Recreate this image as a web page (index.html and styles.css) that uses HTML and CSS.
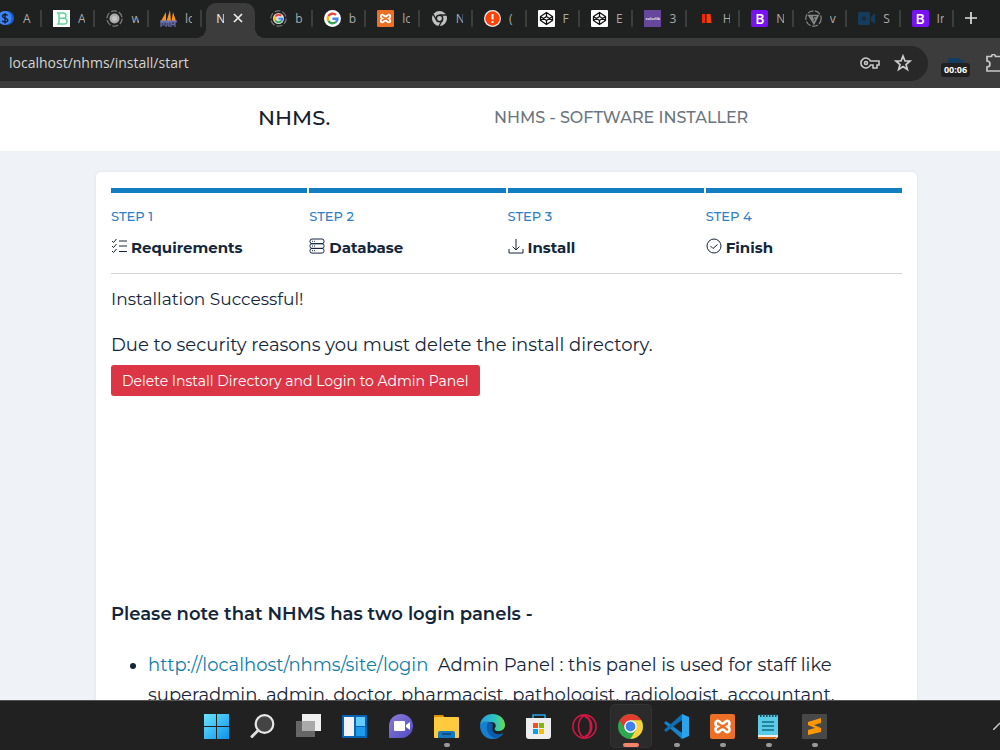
FILE: index.html
```html
<!DOCTYPE html>
<html lang="en">
<head>
    <meta charset="utf-8">
    <title>NHMS - Software Installer</title>
    <link rel="stylesheet" href="styles.css">
</head>
<body>
    <div class="tab-strip">
        <div class="tab first">
            <svg viewBox="2 0 15 17" width="15" height="17"><circle cx="9" cy="8" r="7" fill="#1c5fd0"/><circle cx="6.500" cy="8" r="7" fill="#3f86f5"/><path d="M9.500 5.500C9 4 4.500 3.800 4.500 6.200S9.800 8 9.800 10.200 5 12.500 4.200 10.600M7 3v10.500" fill="none" stroke="#10233f" stroke-width="1.500"/></svg>
            <span>A</span>
        </div>
        <div class="tab">
            <svg viewBox="0 0 17 17"><path fill="#fff" d="M0 0h17v17H0z"/><path d="M4 3h6q3 0 3 2.700T10 8.300q4 0 4 3T10.500 14H4M6 3v11M6 8.300h4" fill="none" stroke="#63d397" stroke-width="1.500"/></svg>
            <span>A</span>
        </div>
        <div class="tab">
            <svg viewBox="0 0 17 17"><circle cx="8.500" cy="8.500" r="7.600" fill="none" stroke="#777" stroke-width="1.300" stroke-dasharray="6 2"/><circle cx="8.500" cy="8.500" r="5" fill="#aaa"/><circle cx="8.500" cy="8.500" r="2.500" fill="#c4c4c4"/></svg>
            <span>w</span>
        </div>
        <div class="tab">
            <svg viewBox="0 0 17 17"><path d="M1 11 6 2v9zM6.500 11 10 0l1 11zM11.500 11 13 2l3 9z" fill="#f7941d"/><path d="M0 11h17l-1 1H1zM1 17v-4h3v2H1m5 2v-4h3v4m-3-2h3m2 2v-4l2 2 2-2v4" fill="none" stroke="#6b6fae" stroke-width="1.200"/></svg>
            <span>lo</span>
        </div>
        <div class="tab active">
            <span>N</span>
            <button class="close" aria-label="Close tab"><svg viewBox="0 0 10 10" width="10" height="10"><path d="m1 1 8 8M9 1 1 9" stroke="#eee" stroke-width="1.700"/></svg></button>
        </div>
        <div class="tab">
            <svg viewBox="0 0 17 17"><circle cx="8.500" cy="8.500" r="7.700" fill="none" stroke="#777" stroke-width="1.200" stroke-dasharray="6 2"/><circle cx="8.500" cy="8.500" r="5.500" fill="#ddd"/><use href="#g" x="3.500" y="3.500" width="10" height="10"/></svg>
            <span>b</span>
        </div>
        <div class="tab">
            <svg viewBox="0 0 17 17"><circle cx="8.500" cy="8.500" r="8.500" fill="#fff"/><symbol id="g" viewBox="0 0 24 24"><g fill="none" stroke-width="4.500"><path d="M4.500 7.500A9 9 0 0 1 18.500 5.500" stroke="#ea4335"/><path d="M4.500 16.500a9 9 0 0 1 0-9" stroke="#fbbc05"/><path d="M18 18.700A9 9 0 0 1 4.500 16.500" stroke="#34a853"/><path d="M12 12.300h9q0 4-3 6.400" stroke="#4285f4"/></g></symbol><use href="#g" x="2" y="2" width="13" height="13"/></svg>
            <span>b</span>
        </div>
        <div class="tab">
            <svg viewBox="0 0 25 25"><symbol id="xampp" viewBox="0 0 25 25"><rect width="25" height="25" rx="2" fill="#eb7025"/><path d="M8.500 7C5 6 4.500 11 7.500 12.500 4.500 14 5 19 8.500 18c2-.5 1.500-2.500 4-2.500s2 2 4 2.500c3.500 1 4-4 1-5.500 3-1.500 2.500-6.500-1-5.500-2 .5-1.500 2.500-4 2.500s-2-2-4-2.500z" fill="none" stroke="#fff" stroke-width="2.600"/></symbol><use href="#xampp" width="25" height="25"/></svg>
            <span>lo</span>
        </div>
        <div class="tab">
            <svg viewBox="0 0 17 17"><circle cx="8.500" cy="8.500" r="7.500" fill="#c2c2c2"/><circle cx="8.500" cy="8.500" r="3.200" fill="#c2c2c2" stroke="#222" stroke-width="1.500"/><path d="M8.500 5H16M5.500 10 2 4M11.500 10 8 16" stroke="#222" stroke-width="1.400"/></svg>
            <span>N</span>
        </div>
        <div class="tab">
            <svg viewBox="0 0 17 17"><circle cx="8.500" cy="8.500" r="8.500" fill="#eee"/><circle cx="8.500" cy="8.500" r="7.200" fill="#ff4106"/><path d="M8.500 4v5.500M8.500 11v2" stroke="#fff" stroke-width="2"/></svg>
            <span>(</span>
        </div>
        <div class="tab">
            <svg viewBox="0 0 17 17"><symbol id="codepen" viewBox="0 0 17 17"><rect width="17" height="17" rx="1" fill="#fff"/><path d="m8.500 2.500 6 4v4l-6 4-6-4v-4zM2.500 6.500l6 4 6-4M2.500 10.500l6-4 6 4M8.500 2.500v4M8.500 10.500v4" fill="none" stroke="#111" stroke-width="1.300"/></symbol><use href="#codepen" width="17" height="17"/></svg>
            <span>F</span>
        </div>
        <div class="tab">
            <svg viewBox="0 0 17 17"><use href="#codepen" width="17" height="17"/></svg>
            <span>E</span>
        </div>
        <div class="tab">
            <div class="colorlib">colorlib</div>
            <span>3</span>
        </div>
        <div class="tab">
            <svg viewBox="0 0 17 17"><path d="M4 4h3v9H4z" fill="#f32800"/><path d="M8.500 4h4l1 9h-5z" fill="#ff3c00"/></svg>
            <span>H</span>
        </div>
        <div class="tab">
            <div class="bootstrap">B</div>
            <span>N</span>
        </div>
        <div class="tab">
            <svg viewBox="0 0 17 17"><g fill="none" stroke="#888"><circle cx="8.500" cy="8.500" r="7.700" stroke-width="1.200" stroke-dasharray="6 1.500"/><path d="M4 5.500h9l-4 8zM6.500 5.500l2 5M9 8h2.500" stroke-width="1.700"/></g></svg>
            <span>v</span>
        </div>
        <div class="tab">
            <svg viewBox="0 0 17 17"><path d="M1 2h10q1 0 1 2v9q0 2-2 2H2q-2 0-2-2V4q0-2 1-2m12 5 4-4v11l-4-3z" fill="#153b5d"/><circle cx="6" cy="8.500" r="2" fill="#20292f"/></svg>
            <span>S</span>
        </div>
        <div class="tab">
            <div class="bootstrap">B</div>
            <span>In</span>
        </div>
        <button class="new-tab" aria-label="New tab"><svg viewBox="0 0 12 12" width="12" height="12"><path d="M6 0v12M0 6h12" stroke="#ddd" stroke-width="1.700"/></svg></button>
    </div>

    <div class="toolbar">
        <div class="omnibox">
            <input type="text" value="localhost/nhms/install/start" aria-label="Address">
            <button aria-label="Passwords"><svg viewBox="0 0 20 14" width="20" height="14"><g fill="none" stroke="#c8c8c8" stroke-width="1.600"><path d="M10.500 5a5 5 0 1 0 0 4H13v3h4V9h2V5z"/><circle cx="6" cy="7" r="1.500"/></g></svg></button>
            <button aria-label="Bookmark this page"><svg viewBox="0 0 18 18" width="18" height="18"><path d="m9 2 2 5h5l-4 3.500 1.400 5L9 12.600l-4.400 2.900L6 10.500 2 7h5z" fill="none" stroke="#ccc" stroke-width="1.700"/></svg></button>
        </div>
        <button class="recorder" aria-label="Screen recorder">
            <svg viewBox="0 0 18 6" width="18" height="6"><path d="M1 6V3q0-2 2-2h8q2 0 2 2l3-1 1 4z" fill="#123c60"/></svg>
            <span>00:06</span>
        </button>
        <button class="extensions" aria-label="Extensions"><svg viewBox="0 0 15 18" width="15" height="18"><path d="M15 2.500H9.500a2 2 0 0 0-4 0H1V7q3 0 3 3t-3 3v4h14" fill="none" stroke="#c8c8c8" stroke-width="1.700"/></svg></button>
    </div>

    <div class="page">
        <header class="navbar">
            <div class="container">
                <a class="brand" href="#">NHMS.</a>
                <span class="subtitle">NHMS - SOFTWARE INSTALLER</span>
            </div>
        </header>
        <main class="card">
            <div class="steps">
                <div class="step">
                    <div class="step-no">STEP 1</div>
                    <div class="step-name">
                        <svg viewBox="0 0 16 16"><path d="m1 3 1.500 1.500L5.500 1M1 8l1.500 1.500 3-3.500M1 13l1.500 1.500 3-3.500M8 3h8M8 8h8M8 13.500h8"/></svg>
                        Requirements
                    </div>
                </div>
                <div class="step">
                    <div class="step-no">STEP 2</div>
                    <div class="step-name">
                        <svg viewBox="0 0 16 16"><rect x="1" y="1" width="14" height="4.700" rx="2"/><rect x="1" y="5.700" width="14" height="4.700" rx="2"/><rect x="1" y="10.400" width="14" height="4.700" rx="2"/><path d="M3 3.300h1M5 3.300h1M3 8h1M5 8h1M3 12.700h1M5 12.700h1"/></svg>
                        Database
                    </div>
                </div>
                <div class="step">
                    <div class="step-no">STEP 3</div>
                    <div class="step-name">
                        <svg viewBox="0 0 16 16"><path d="M8 1v11M4.500 8.500 8 12l3.500-3.500M1 11v4h14v-4"/></svg>
                        Install
                    </div>
                </div>
                <div class="step">
                    <div class="step-no">STEP 4</div>
                    <div class="step-name">
                        <svg viewBox="0 0 16 16"><circle cx="8" cy="8" r="7"/><path d="m4.500 8 2.500 2.500L11.500 6.500"/></svg>
                        Finish
                    </div>
                </div>
            </div>
            <div class="content">
                <p class="status">Installation Successful!</p>
                <p>Due to security reasons you must delete the install directory.</p>
                <button class="btn-danger">Delete Install Directory and Login to Admin Panel</button>
                <h4>Please note that NHMS has two login panels -</h4>
                <ul>
                    <li><a href="#">http://localhost/nhms/site/login</a>&nbsp; Admin Panel : this panel is used for staff like superadmin, admin, doctor, pharmacist, pathologist, radiologist, accountant,</li>
                </ul>
            </div>
        </main>
    </div>

    <div class="taskbar">
        <div class="apps">
            <button aria-label="Start"><svg viewBox="0 0 25 25"><linearGradient id="win" x2="1" y2="1"><stop stop-color="#6be3ff"/><stop offset="1" stop-color="#0a94ea"/></linearGradient><path d="M0 0h12v12H0zM13 0h12v12H13zM0 13h12v12H0zM13 13h12v12H13z" fill="url(#win)"/></svg></button>
            <button aria-label="Search"><svg viewBox="0 0 25 25"><circle cx="14.500" cy="10" r="8.800" fill="#444" stroke="#e8e8e8" stroke-width="2.200"/><path d="m8 16.500-6 6" stroke="#ddd" stroke-width="3" stroke-linecap="round"/></svg></button>
            <button aria-label="Task view"><svg viewBox="0 0 25 25"><path d="M6 0h19v17H6z" fill="#f0f0f0"/><path d="M0 7h19v16H0z" fill="#666"/><path d="M6 7h13v10H6z" fill="#aaa"/></svg></button>
            <button aria-label="Widgets"><svg viewBox="0 0 25 25"><rect y="1" width="25" height="23" rx="1" fill="#0863b5"/><path d="M2 3h10v19H2z" fill="#f2f2f2"/><path d="M14 3h9v9h-9z" fill="#64cdfb"/><path d="M14 13h9v9h-9z" fill="#1c9bea"/></svg></button>
            <button aria-label="Chat"><svg viewBox="0 0 25 25"><linearGradient id="chat" x2="1" y2="1"><stop stop-color="#8b7ad9"/><stop offset="1" stop-color="#504cc4"/></linearGradient><path d="M1 24V12A12 12 0 1 1 13 24z" fill="url(#chat)"/><rect x="6" y="7" width="11" height="10" rx="1" fill="#fff"/><path d="m18 11 4-3v8l-4-3z" fill="#fff"/></svg></button>
            <button class="open" aria-label="File Explorer"><svg viewBox="0 0 25 25"><path d="M0 1h9l2 3H0z" fill="#d99100"/><rect y="3" width="25" height="21" rx="1" fill="#ffca3e"/><path d="M4 24v-5q0-2 2-2h13q2 0 2 2v5z" fill="#1777bd"/><path d="M8 20h9" stroke="#0c4e87" stroke-width="2"/></svg></button>
            <button aria-label="Edge"><svg viewBox="0 0 25 25"><linearGradient id="edge" x2="1"><stop stop-color="#2a9be0"/><stop offset=".6" stop-color="#2ec4c0"/><stop offset="1" stop-color="#6bdc4e"/></linearGradient><path d="M0 11C1 4 6 0 12.500 0 20 0 25 5 25 11c0 4-3 6-7 6-3 0-4-2-3-3 2-3 0-6-4-6C6 8 2 9 0 11" fill="url(#edge)"/><path d="M0 11c2-3 5-4 9-3.500-4 6 0 12.500 8 13 3 0 5-.5 6.500-1.500C21 23 17 25 12.500 25 5 25 0 19 0 11" fill="#1580d0"/><path d="M9 8c-4 4-3 12 5 16 4 0 7-2 9.500-5-7 3-12 0-11-6 1-3-1-5-3.500-5" fill="#0d5bab"/></svg></button>
            <button aria-label="Microsoft Store"><svg viewBox="0 0 25 25"><path d="M7 5V1h12v4" fill="none" stroke="#27a4e6" stroke-width="1.500"/><path d="M0 4h25v18q0 3-3 3H3q-3 0-3-3z" fill="#eee"/><path d="M7 9h5v5H7z" fill="#f25022"/><path d="M13 9h5v5h-5z" fill="#7fba00"/><path d="M7 15h5v5H7z" fill="#00a4ef"/><path d="M13 15h5v5h-5z" fill="#ffb900"/></svg></button>
            <button aria-label="Opera"><svg viewBox="0 0 25 25"><g fill="none" stroke="#d31645" stroke-width="1.600"><circle cx="12.500" cy="12.500" r="11.600"/><ellipse cx="12.500" cy="12.500" rx="6" ry="10.500"/><path d="M13 3c9 1 9 18 0 19"/></g></svg></button>
            <button class="open current" aria-label="Chrome"><svg viewBox="0 0 25 25"><circle cx="12.500" cy="12.500" r="12.500" fill="#2da94f"/><path d="M1.700 6.300A12.500 12.500 0 0 1 23.300 6.300H12.500L7 15.600z" fill="#e33b2e"/><path d="M12.500 6.300h10.800A12.500 12.500 0 0 1 12.500 25L18 15.600z" fill="#fdd13a"/><circle cx="12.500" cy="12.500" r="6.300" fill="#fff"/><circle cx="12.500" cy="12.500" r="4.900" fill="#3b82f0"/></svg></button>
            <button class="open" aria-label="Visual Studio Code"><svg viewBox="0 0 25 25"><path d="m18 0 7 3v19l-7 3z" fill="#2ba4ee"/><path d="M2 7 18 19v6L0 9z" fill="#1684cb"/><path d="M2 18 18 6V0L0 16z" fill="#0e6fb4"/></svg></button>
            <button class="open" aria-label="XAMPP"><svg viewBox="0 0 25 25"><use href="#xampp" width="25" height="25"/></svg></button>
            <button class="open" aria-label="Notepad"><svg viewBox="0 0 25 25"><rect x="2" y="1" width="20" height="22" rx="1" fill="#5bcbe6"/><path d="M2 21h20v2l-2 2H2z" fill="#eee"/><path d="M2 23h19l-2 2H2z" fill="#c86818"/><path d="M6 8h12M6 12h12M6 16h12" stroke="#126e8c" stroke-width="1.500"/><path d="M4 1.500h17" stroke="#1c4b5a" stroke-width="3" stroke-dasharray="1.500 1.500"/></svg></button>
            <button class="open" aria-label="Sublime Text"><svg viewBox="0 0 25 25"><rect width="25" height="25" rx="1" fill="#484848"/><path d="M19 4v5l-7 2 7 3v4L6 21v-5l7-2-7-3V8z" fill="#ff9800"/></svg></button>
        </div>
        <button class="tray" aria-label="Show hidden icons"><svg viewBox="0 0 7 8" width="7" height="8"><path d="m0 8 7-7" stroke="#ccc" stroke-width="1.500"/></svg></button>
    </div>
</body>
</html>
```
FILE: styles.css
```css
* {
    box-sizing: border-box;
}

body {
    margin: 0;
    height: 100vh;
    display: flex;
    flex-direction: column;
    overflow: hidden;
    background: #eff3f7;
    color: #14263a;
    font-family: Montserrat, Inter, sans-serif;
}

button {
    padding: 0;
    border: none;
    background: none;
    font-family: inherit;
}

svg {
    display: block;
    flex: none;
}

/* browser tabs */
.tab-strip {
    flex: none;
    display: flex;
    height: 38px;
    background: #1f2120;
    font-family: "Segoe UI", "Open Sans", sans-serif;
    font-size: 12px;
    color: #aaa;
}

.tab {
    flex: 1 1 0;
    min-width: 0;
    display: flex;
    align-items: center;
    gap: 8px;
    padding: 0 0 2px 11px;
}

.tab > svg {
    width: 17px;
    height: 17px;
}

.tab > span {
    width: 8px;
    overflow: hidden;
    white-space: nowrap;
}

.tab::after {
    content: "";
    flex: none;
    width: 2px;
    height: 17px;
    margin-left: auto;
    background: #3c3d3d;
}

.tab.first {
    flex: 0 0 42px;
    padding-left: 0;
}

.tab.first > svg {
    width: 15px;
}

.tab.active {
    position: relative;
    flex: 0 0 49px;
    margin: 3px 4px 0;
    padding: 0 0 5px 10px;
    border-radius: 10px 10px 0 0;
    background: #3c3c3c;
    color: #eee;
    gap: 9px;
}

/* flared feet of the selected tab */
.tab.active::before,
.tab.active::after {
    content: "";
    position: absolute;
    bottom: 0;
    width: 10px;
    height: 10px;
}

.tab.active::before {
    left: -10px;
    background: radial-gradient(circle at 0 0, transparent 10px, #3c3c3c 10px);
}

.tab.active::after {
    right: -10px;
    background: radial-gradient(circle at 100% 0, transparent 10px, #3c3c3c 10px);
}

.colorlib,
.bootstrap {
    flex: none;
    width: 17px;
    height: 17px;
    overflow: hidden;
    text-align: center;
    line-height: 17px;
    color: #fff;
}

.colorlib {
    background: #67479b;
    font-size: 4px;
    font-weight: 600;
}

.bootstrap {
    border-radius: 2px;
    background: #7812f5;
    font-size: 14px;
    font-weight: 600;
}

.new-tab {
    flex: 0 0 46px;
    display: flex;
    align-items: center;
    padding: 0 0 2px 11px;
}

/* address bar */
.toolbar {
    flex: none;
    display: flex;
    align-items: center;
    height: 50px;
    background: #3c3c3c;
    font-family: "Segoe UI", "Open Sans", sans-serif;
}

.omnibox {
    flex: 1;
    display: flex;
    align-items: center;
    gap: 14px;
    height: 35px;
    padding: 0 16px 1px 9px;
    border-radius: 0 18px 18px 0;
    background: #282828;
}

.omnibox input {
    flex: 1;
    min-width: 0;
    padding: 0;
    border: none;
    outline: none;
    background: none;
    color: #d4d4d4;
    font-family: inherit;
    font-size: 14px;
}

.recorder {
    width: 29px;
    margin: 8px 16px 0 13px;
    display: flex;
    flex-direction: column;
    align-items: center;
}

.recorder span {
    width: 29px;
    border-radius: 3px;
    background: #202020;
    color: #fff;
    font-size: 9px;
    font-weight: 700;
    line-height: 14px;
}

.extensions {
    width: 14px;
    overflow: hidden;
}

/* installer page */
.page {
    flex: 1;
    min-height: 0;
    overflow: hidden;
}

.navbar {
    background: #fff;
}

.container {
    display: grid;
    grid-template-columns: 236px 1fr;
    align-items: center;
    height: 63px;
    padding: 0 0 5px 258px;
}

.brand {
    color: #15202c;
    font-size: 21px;
    font-weight: 500;
    text-decoration: none;
}

.subtitle {
    color: #6c757d;
    font-size: 16px;
    font-weight: 500;
}

.card {
    margin: 21px 83px 0 96px;
    padding: 16px 15px;
    border-radius: 5px;
    background: #fff;
    box-shadow: 0 0 3px rgba(30, 50, 80, 0.1);
}

.steps {
    display: grid;
    grid-template-columns: repeat(4, 1fr);
    gap: 2px;
    padding-bottom: 15px;
    border-bottom: 1px solid #d2d4d6;
}

.step {
    border-top: 5px solid #127dc0;
}

.step-no {
    padding-top: 13px;
    color: #2f80c4;
    font-size: 13px;
    font-weight: 500;
    line-height: 20px;
}

.step-name {
    display: flex;
    align-items: center;
    gap: 4px;
    margin-top: 12px;
    font-size: 15px;
    font-weight: 700;
    line-height: 20px;
}

.step-name svg {
    width: 16px;
    height: 16px;
    margin-bottom: 4px;
    fill: none;
    stroke: #14263a;
}

.content {
    font-size: 18px;
    line-height: 30px;
}

.content p {
    margin: 0;
}

.content .status {
    margin: 10px 0 16px;
    font-size: 17px;
}

.btn-danger {
    display: block;
    height: 31px;
    margin-top: 5px;
    padding: 0 11px;
    border-radius: 3px;
    background: #dc3545;
    color: #fff;
    font-size: 14px;
}

.content h4 {
    margin: 203px 0 21px;
    font-size: 18px;
    font-weight: 600;
}

.content ul {
    margin: 0;
    padding-left: 37px;
}

.content a {
    color: #0f7ca8;
    text-decoration: none;
}

/* windows taskbar */
.taskbar {
    flex: none;
    display: grid;
    grid-template-columns: 1fr auto 1fr;
    height: 50px;
    padding-left: 31px;
    border-top: 1px solid #555;
    background: #212121;
}

.apps {
    grid-column: 2;
    display: flex;
}

.apps button {
    width: 46px;
    display: flex;
    flex-direction: column;
    align-items: center;
    padding-top: 13px;
}

.apps svg {
    width: 25px;
    height: 25px;
}

.apps .open::after {
    content: "";
    width: 6px;
    height: 4px;
    margin-top: 4px;
    border-radius: 2px;
    background: #999;
}

.apps .current {
    width: 40px;
    height: 42px;
    margin: 4px 3px 0;
    padding-top: 9px;
    border-radius: 4px;
    background: #2b2b2b;
    box-shadow: 0 0 0 1px #333;
}

.apps .current::after {
    width: 16px;
    background: #f4846a;
}

.tray {
    justify-self: end;
    align-self: center;
}
```
